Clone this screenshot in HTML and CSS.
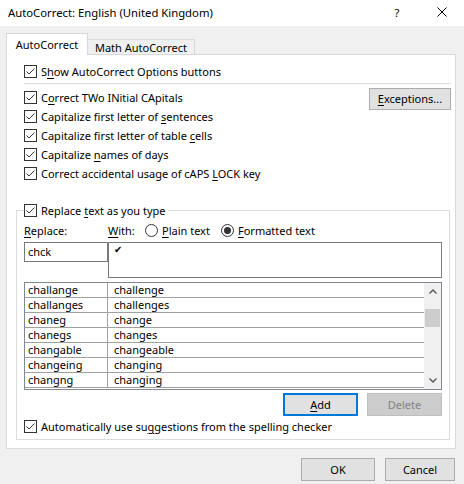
FILE: index.html
```html
<!DOCTYPE html>
<html>
<head>
<meta charset="utf-8">
<title>AutoCorrect</title>
<link rel="stylesheet" href="styles.css">
</head>
<body>
<div class="window">
  <svg class="defs" width="0" height="0" aria-hidden="true">
    <defs>
      <symbol id="cb" viewBox="0 0 13 13">
        <rect x="0.5" y="0.5" width="12" height="12" fill="#fff" stroke="#333"/>
        <path d="M2.5 6.5 L5 9 L10.5 3.5" fill="none" stroke="#333" stroke-width="1"/>
      </symbol>
      <symbol id="rb" viewBox="0 0 13 13">
        <circle cx="6.5" cy="6.5" r="6" fill="#fff" stroke="#333"/>
      </symbol>
      <symbol id="rbon" viewBox="0 0 13 13">
        <circle cx="6.5" cy="6.5" r="6" fill="#fff" stroke="#333"/>
        <circle cx="6.5" cy="6.5" r="3.5" fill="#333"/>
      </symbol>
    </defs>
  </svg>
  <div class="titlebar">
    <span class="title">AutoCorrect: English (United Kingdom)</span>
    <span class="help">?</span>
    <svg class="close" width="10" height="10" viewBox="0 0 10 10"><path d="M0.5 0.5 L9.5 9.5 M9.5 0.5 L0.5 9.5" stroke="#000" stroke-width="1" fill="none"/></svg>
  </div>
  <div class="client">
    <div class="tabs">
      <div class="tab active">AutoCorrect</div>
      <div class="tab">Math AutoCorrect</div>
    </div>
    <div class="panel">
      <div class="top">
        <div class="check"><svg class="cb"><use href="#cb"/></svg><span>S<u>h</u>ow AutoCorrect Options buttons</span></div>
        <div class="sep"></div>
        <div class="opts">
          <div class="optlist">
            <div class="check"><svg class="cb"><use href="#cb"/></svg><span>C<u>o</u>rrect TWo INitial CApitals</span></div>
            <div class="check"><svg class="cb"><use href="#cb"/></svg><span>Capitalize first letter of <u>s</u>entences</span></div>
            <div class="check"><svg class="cb"><use href="#cb"/></svg><span>Capitalize first letter of table <u>c</u>ells</span></div>
            <div class="check"><svg class="cb"><use href="#cb"/></svg><span>Capitalize <u>n</u>ames of days</span></div>
            <div class="check"><svg class="cb"><use href="#cb"/></svg><span>Correct accidental usage of cAPS <u>L</u>OCK key</span></div>
          </div>
          <div class="btn exc"><u>E</u>xceptions...</div>
        </div>
      </div>
      <fieldset class="group">
        <legend class="check"><svg class="cb"><use href="#cb"/></svg><span>Replace <u>t</u>ext as you type</span></legend>
        <div class="labels">
          <span class="lbl-replace"><u>R</u>eplace:</span>
          <span class="lbl-with"><u>W</u>ith:</span>
          <span class="radio plain"><svg class="rb"><use href="#rb"/></svg><span><u>P</u>lain text</span></span>
          <span class="radio"><svg class="rb"><use href="#rbon"/></svg><span><u>F</u>ormatted text</span></span>
        </div>
        <div class="inputs">
          <div class="field replace">chck</div>
          <div class="field with"><span class="tick">✔</span></div>
        </div>
        <div class="list">
          <div class="rows">
            <div class="row"><span class="c1">challange</span><span class="c2">challenge</span></div>
            <div class="row"><span class="c1">challanges</span><span class="c2">challenges</span></div>
            <div class="row"><span class="c1">chaneg</span><span class="c2">change</span></div>
            <div class="row"><span class="c1">chanegs</span><span class="c2">changes</span></div>
            <div class="row"><span class="c1">changable</span><span class="c2">changeable</span></div>
            <div class="row"><span class="c1">changeing</span><span class="c2">changing</span></div>
            <div class="row"><span class="c1">changng</span><span class="c2">changing</span></div>
          </div>
          <div class="scrollbar">
            <div class="arrow"><svg width="8" height="5" viewBox="0 0 8 5"><path d="M0.5 4.5 L4 1 L7.5 4.5" fill="none" stroke="#606060" stroke-width="1.5"/></svg></div>
            <div class="track"><div class="thumb"></div></div>
            <div class="arrow"><svg width="8" height="5" viewBox="0 0 8 5"><path d="M0.5 0.5 L4 4 L7.5 0.5" fill="none" stroke="#606060" stroke-width="1.5"/></svg></div>
          </div>
        </div>
        <div class="btnrow">
          <div class="btn add"><u>A</u>dd</div>
          <div class="btn disabled">Delete</div>
        </div>
        <div class="check auto"><svg class="cb"><use href="#cb"/></svg><span>Automatically use su<u>g</u>gestions from the spelling checker</span></div>
      </fieldset>
    </div>
    <div class="footer">
      <div class="btn ok">OK</div>
      <div class="btn cancel">Cancel</div>
    </div>
  </div>
</div>
</body>
</html>
```

FILE: styles.css
```css
* { box-sizing: border-box; }
html, body { margin: 0; padding: 0; }
body {
  width: 464px;
  height: 484px;
  overflow: hidden;
  background: #f0f0f0;
  font-family: "Noto Sans", "Open Sans", sans-serif;
  font-size: 11px;
  color: #000;
}
u { text-decoration: underline; text-underline-offset: 2px; }
.defs { display: block; width: 0; height: 0; overflow: hidden; }
.window { width: 464px; height: 484px; display: flex; flex-direction: column; }

.titlebar {
  height: 26px;
  background: #fff;
  display: flex;
  align-items: center;
  padding: 0 0 2px 8px;
  font-size: 11.3px;
}
.title { flex: 1; }
.help { width: 8px; text-align: center; margin-right: 36px; }
.close { display: block; margin-right: 17px; }

.client { display: flex; flex-direction: column; }
.tabs {
  margin-top: 7px;
  padding-left: 6px;
  height: 21px;
  display: flex;
  align-items: flex-end;
}
.tab {
  height: 15px;
  width: 107px;
  border: 1px solid #d9d9d9;
  border-bottom: none;
  border-left: none;
  background: #f0f0f0;
  display: flex;
  align-items: center;
  justify-content: center;
  line-height: 13px;
}
.tab.active {
  width: 82px;
  height: 22px;
  margin-bottom: -1px;
  border-left: 1px solid #d9d9d9;
  background: #fff;
  position: relative;
  z-index: 1;
  padding-bottom: 1px;
}

.panel {
  margin: 0 8px 0 6px;
  border: 1px solid #d9d9d9;
  background: #fff;
  display: flex;
  flex-direction: column;
}
.top { padding: 7px 4px 0 17px; }
.check {
  display: flex;
  align-items: center;
  height: 19px;
  line-height: 19px;
  white-space: nowrap;
}
.cb { width: 13px; height: 13px; flex: none; margin-right: 4px; display: block; }
.sep { height: 1px; background: #dcdcdc; margin: 2px 0 4px 0; }
.opts { display: flex; justify-content: space-between; align-items: flex-start; }
.optlist { display: flex; flex-direction: column; }

.btn {
  height: 23px;
  border: 1px solid #adadad;
  background: #e1e1e1;
  display: flex;
  align-items: center;
  justify-content: center;
  line-height: 14px;
}
.exc { width: 82px; height: 22px; }

.group {
  margin: 18px 5px 8px 9px;
  padding: 0 7px 3px 7px;
  border: 1px solid #dcdcdc;
  min-width: 0;
}
.group legend { padding: 0 2px 0 0; margin: 0; }

.labels { display: flex; align-items: center; height: 20px; white-space: nowrap; }
.lbl-replace { width: 84px; }
.lbl-with { width: 37px; }
.radio { display: flex; align-items: center; }
.radio.plain { width: 76px; }
.rb { width: 13px; height: 13px; display: block; margin-right: 4px; flex: none; }

.inputs { display: flex; align-items: flex-start; margin-top: 2px; }
.field { border: 1px solid #7a7a7a; background: #fff; }
.replace { width: 84px; height: 20px; padding-left: 3px; line-height: 18px; }
.with { width: 334px; height: 36px; padding: 2px 0 0 5px; }
.tick { font-family: "DejaVu Sans", sans-serif; font-size: 10px; line-height: 10px; display: block; }

.list {
  margin-top: 4px;
  width: 418px;
  height: 108px;
  border: 1px solid #828790;
  display: flex;
  background: #fff;
}
.rows { flex: 1; display: flex; flex-direction: column; }
.row {
  display: grid;
  grid-template-columns: 83px 1fr;
  height: 15px;
  border-bottom: 1px solid #a0a0a0;
  line-height: 14px;
}
.c1 { border-right: 1px solid #a0a0a0; padding-left: 3px; }
.c2 { padding-left: 6px; }
.scrollbar {
  width: 17px;
  background: #f0f0f0;
  display: flex;
  flex-direction: column;
}
.arrow { height: 17px; display: flex; align-items: center; justify-content: center; }
.arrow svg { display: block; }
.track { flex: 1; padding: 9px 1px 0 1px; }
.thumb { height: 18px; background: #cdcdcd; }

.btnrow { display: flex; justify-content: flex-end; gap: 9px; margin-top: 3px; }
.btnrow .btn { width: 75px; }
.add { border: 2px solid #0078d7; }
.disabled { color: #838383; border-color: #bfbfbf; background: #cccccc; }
.auto { margin-top: 1px; }

.footer { display: flex; justify-content: flex-end; gap: 10px; margin: 9px 9px 0 0; }
.ok { width: 74px; }
.cancel { width: 70px; }
```
